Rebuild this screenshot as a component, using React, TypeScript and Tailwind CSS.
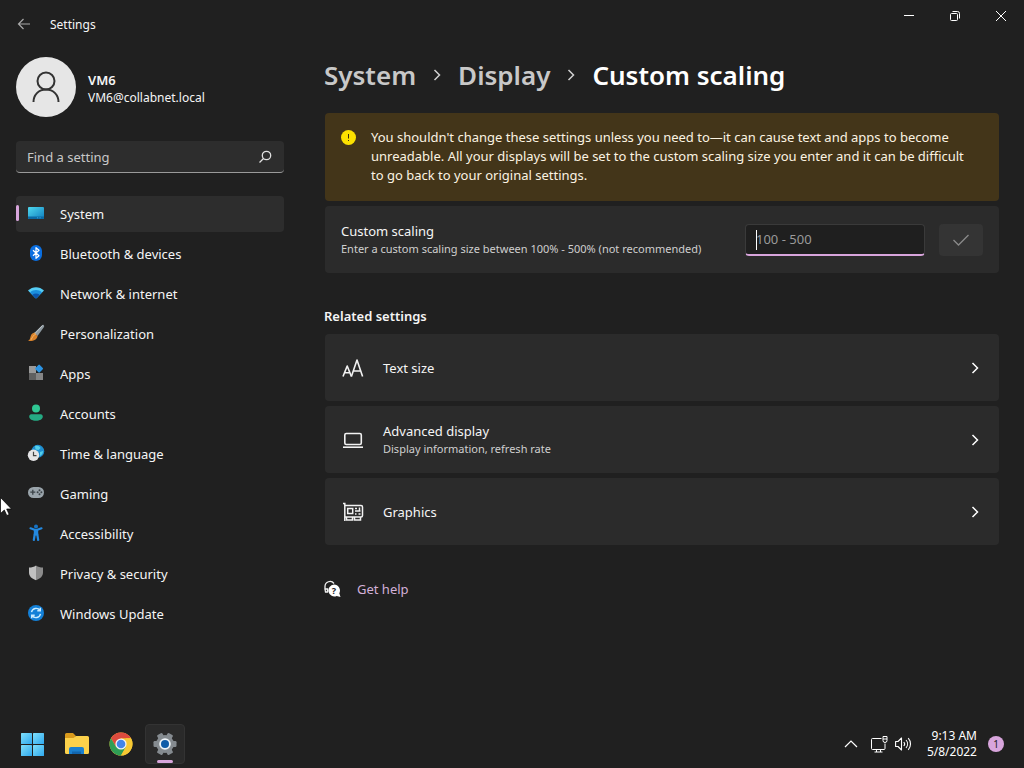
import React from 'react';

const SystemIcon = () => (
  <svg width="18" height="18" viewBox="0 0 18 18">
    <defs>
      <linearGradient id="sys" x1="0" y1="0" x2="1" y2="1">
        <stop offset="0" stopColor="#4fd8ee" />
        <stop offset="1" stopColor="#0f7fc0" />
      </linearGradient>
    </defs>
    <rect x="1" y="3" width="16" height="12" rx="1" fill="url(#sys)" />
    <path d="M1 12.500h16V14a1 1 0 0 1-1 1H2a1 1 0 0 1-1-1z" fill="#0b6aa5" />
    <path d="M10 13.800h1.200M12.500 13.800h1.200" stroke="#2fa4dd" />
  </svg>
);

const BluetoothIcon = () => (
  <svg width="18" height="18" viewBox="0 0 18 18">
    <rect x="3" y="1" width="12" height="16" rx="6" fill="#0a6ee0" />
    <path d="M6 6.300l6 5.400-3 2.600V3.700l3 2.600-6 5.400" fill="none" stroke="#fff" strokeWidth="1.200" strokeLinejoin="round" />
  </svg>
);

const NetworkIcon = () => (
  <svg width="18" height="18" viewBox="0 0 18 18">
    <path d="M1 6.500C5.500 2 12.500 2 17 6.500L9.700 14a1 1 0 0 1-1.400 0z" fill="#55cdf5" />
    <path d="M3 8.400C6.500 5.200 11.500 5.200 15 8.400L9.700 14a1 1 0 0 1-1.400 0z" fill="#1b8fdd" />
    <path d="M5.300 10.800c2.200-1.800 5.200-1.800 7.400 0L9.700 14a1 1 0 0 1-1.400 0z" fill="#0b55ac" />
  </svg>
);

const BrushIcon = () => (
  <svg width="18" height="18" viewBox="0 0 18 18">
    <path d="M16.800 1.200c.6.600.4 1.300 0 2L10.500 12 7.200 9 14.800 1.500c.6-.6 1.400-.9 2-.3z" fill="#8d989f" />
    <path d="M15.500 1.500L8 9.500" stroke="#c1c8cc" strokeWidth="1" />
    <path d="M7.200 8.800l3.400 3.200c-.5 3.500-4 5.500-9.600 5 2.300-1.400 2-3.200 2.800-5.300.6-1.700 1.900-2.600 3.400-2.900z" fill="#d9822b" />
    <path d="M7.200 8.800l1.500 1.400c-2 .4-3.200 3-4.700 5.600" fill="none" stroke="#f5b566" />
  </svg>
);

const AppsIcon = () => (
  <svg width="18" height="18" viewBox="0 0 18 18">
    <rect x="2" y="2" width="7" height="7" fill="#9a9a9a" />
    <rect x="2" y="9" width="7" height="7" fill="#606060" />
    <rect x="9" y="9" width="7" height="7" fill="#858585" />
    <rect x="9" y="1.500" width="6.200" height="6.200" rx="1" transform="rotate(45 12.100 4.600)" fill="#2b94e4" />
  </svg>
);

const AccountsIcon = () => (
  <svg width="18" height="18" viewBox="0 0 18 18">
    <circle cx="9" cy="4.500" r="4" fill="#2fc793" />
    <path d="M2.200 12.500c0-1.300.8-2.300 2-2.300h9.600c1.200 0 2 1 2 2.300 0 2.800-3 4.200-6.800 4.200s-6.800-1.400-6.800-4.200z" fill="#25aa83" />
  </svg>
);

const TimeIcon = () => (
  <svg width="18" height="18" viewBox="0 0 18 18">
    <circle cx="10.800" cy="7.200" r="6.400" fill="#1f8fd0" />
    <path d="M8 2c3-1 5 .5 5.500 2l-2 2-3-.5zM13 8l3-1c0 2-1 4-3 5z" fill="#56d0ea" />
    <circle cx="6.500" cy="11.200" r="5.700" fill="#e4e4e6" />
    <path d="M6.500 7.700v4h3" fill="none" stroke="#444" strokeWidth="1.200" />
  </svg>
);

const GamingIcon = () => (
  <svg width="18" height="18" viewBox="0 0 18 18">
    <rect x="1" y="3" width="16" height="11" rx="5.500" fill="#9aa4ab" />
    <path d="M3.300 8.200h5M5.800 5.700v5" stroke="#3b4247" strokeWidth="1.300" />
    <circle cx="12.500" cy="6.200" r="1" fill="#3b4247" />
    <circle cx="14.400" cy="8.200" r="1" fill="#3b4247" />
    <circle cx="12.500" cy="10.200" r="1" fill="#3b4247" />
    <circle cx="10.600" cy="8.200" r="1" fill="#3b4247" />
  </svg>
);

const AccessibilityIcon = () => (
  <svg width="18" height="18" viewBox="0 0 18 18">
    <circle cx="9" cy="2.600" r="2" fill="#1673c4" />
    <path d="M3.500 4.300L9 6.300l5.500-2M6.800 16l1-6h2.400l1 6" fill="none" stroke="#2389e0" strokeWidth="2.200" strokeLinecap="round" strokeLinejoin="round" />
    <rect x="6.800" y="6" width="4.400" height="5.500" fill="#2389e0" />
  </svg>
);

const ShieldIcon = () => (
  <svg width="18" height="18" viewBox="0 0 18 18">
    <path d="M9 1.500c2 1.500 4.300 2 7 2v5c0 3.600-2.500 6.200-7 7.700z" fill="#8b8b8b" />
    <path d="M9 1.500c-2 1.500-4.300 2-7 2v5c0 3.600 2.500 6.200 7 7.700z" fill="#c0c0c0" />
  </svg>
);

const UpdateIcon = () => (
  <svg width="18" height="18" viewBox="0 0 18 18">
    <circle cx="9" cy="9" r="8" fill="#1380d8" />
    <path d="M4.500 8.200A4.700 4.700 0 0 1 13 6.500M13.300 3.800v3h-3M13.500 9.800A4.700 4.700 0 0 1 5 11.500M4.700 14.200v-3h3" fill="none" stroke="#c9eaff" strokeWidth="1.400" />
  </svg>
);

const navItems = [
  { label: 'System', icon: <SystemIcon />, active: true },
  { label: 'Bluetooth & devices', icon: <BluetoothIcon /> },
  { label: 'Network & internet', icon: <NetworkIcon /> },
  { label: 'Personalization', icon: <BrushIcon /> },
  { label: 'Apps', icon: <AppsIcon /> },
  { label: 'Accounts', icon: <AccountsIcon /> },
  { label: 'Time & language', icon: <TimeIcon /> },
  { label: 'Gaming', icon: <GamingIcon /> },
  { label: 'Accessibility', icon: <AccessibilityIcon /> },
  { label: 'Privacy & security', icon: <ShieldIcon /> },
  { label: 'Windows Update', icon: <UpdateIcon /> },
];

const TextSizeIcon = () => (
  <svg width="22" height="22" viewBox="0 0 22 22" fill="none" stroke="#f2f2f2" strokeWidth="1.600" strokeLinejoin="round">
    <path d="M1 19.500L5.200 9l4.200 10.500M2.500 15.800h5.400" />
    <path d="M9.400 19.500L15 3l5.600 16.500M11.300 14h7.400" />
  </svg>
);

const LaptopIcon = () => (
  <svg width="22" height="22" viewBox="0 0 22 22" fill="none" stroke="#f2f2f2" strokeWidth="1.600">
    <rect x="2.800" y="4.500" width="16.500" height="11" rx="1.500" />
    <path d="M1 18.200h20" />
  </svg>
);

const GraphicsIcon = () => (
  <svg width="22" height="22" viewBox="0 0 22 22" fill="none" stroke="#f2f2f2" strokeWidth="1.500">
    <path d="M1 2.500h1.800v17.500M2.800 4.500h16.200a1.500 1.500 0 0 1 1.500 1.500v8.500a1.500 1.500 0 0 1-1.500 1.500H2.800" />
    <rect x="5.700" y="7.500" width="5" height="5" />
    <path d="M13 7.500h2M17.500 6.500v3M13 10h5.500M13 13h1.500M16.500 13h2M4.500 16v3h6v-3M12.500 16v3h6v-3" />
  </svg>
);

const relatedItems = [
  { title: 'Text size', icon: <TextSizeIcon /> },
  { title: 'Advanced display', sub: 'Display information, refresh rate', icon: <LaptopIcon /> },
  { title: 'Graphics', icon: <GraphicsIcon /> },
];

const Chevron = ({ size, className }: { size: number; className?: string }) => (
  <svg width={size} height={size} viewBox="0 0 12 12" fill="none" stroke="currentColor" strokeWidth="1.500" className={className}>
    <path d="M3.500 1l5 5-5 5" />
  </svg>
);

const TitleBar = () => (
  <header className="flex h-12 items-start justify-between">
    <div className="flex h-12 items-center gap-[18px] pl-4">
      <button aria-label="Back" className="text-[#a8a8a8]">
        <svg width="16" height="16" viewBox="0 0 16 16" fill="none" stroke="currentColor" strokeWidth="1.200">
          <path d="M14 8H2.500M7.500 3l-5 5 5 5" />
        </svg>
      </button>
      <span className="pt-[2px] text-[12px] leading-4">Settings</span>
    </div>
    <div className="flex">
      <button aria-label="Minimize" className="flex h-8 w-[46px] items-center justify-center">
        <svg width="10" height="10" viewBox="0 0 10 10" stroke="#fff"><path d="M0 4.500h10" /></svg>
      </button>
      <button aria-label="Restore" className="flex h-8 w-[46px] items-center justify-center">
        <svg width="10" height="10" viewBox="0 0 10 10" fill="none" stroke="#fff">
          <rect x="0.500" y="2.500" width="7" height="7" rx="1" />
          <path d="M2.500 0.500h5a2 2 0 0 1 2 2v5" />
        </svg>
      </button>
      <button aria-label="Close" className="flex h-8 w-[46px] items-center justify-center">
        <svg width="10" height="10" viewBox="0 0 10 10" stroke="#fff"><path d="M0 0l10 10M10 0L0 10" /></svg>
      </button>
    </div>
  </header>
);

const Sidebar = () => (
  <aside className="w-[300px] shrink-0 px-4 pt-[9px]">
    <div className="flex items-center gap-3">
      <div className="flex h-[60px] w-[60px] items-center justify-center rounded-full bg-[#e6e6e6]">
        <svg width="28" height="32" viewBox="0 0 28 32" fill="none" stroke="#333" strokeWidth="2">
          <circle cx="14" cy="10" r="8.500" />
          <path d="M1.500 31c0-7 5-12.500 12.500-12.500S26.500 24 26.500 31" />
        </svg>
      </div>
      <div className="pt-[3px]">
        <p className="text-[13px] leading-[18px] font-semibold">VM6</p>
        <p className="text-[12px] leading-[18px]">VM6@collabnet.local</p>
      </div>
    </div>
    <div className="relative mt-6">
      <input
        type="search"
        aria-label="Find a setting"
        placeholder="Find a setting"
        className="block h-8 w-full rounded-[4px] border-b border-[#9a9a9a] bg-[#2d2d2d] pr-10 pl-[11px] text-[13px] placeholder:text-[#c8c8c8]"
      />
      <svg width="14" height="14" viewBox="0 0 14 14" fill="none" stroke="#e0e0e0" strokeWidth="1.300" className="absolute top-[9px] right-3">
        <circle cx="8.500" cy="5.500" r="4.200" />
        <path d="M5.500 8.500L1.500 12.500" />
      </svg>
    </div>
    <nav className="mt-[23px] flex flex-col gap-1">
      {navItems.map((item) => (
        <a
          key={item.label}
          href="#"
          className={`relative flex h-9 items-center gap-[15px] rounded-[4px] pl-[11px] text-[13px] ${item.active ? 'bg-[#2d2d2d]' : ''}`}
        >
          {item.active && <span className="absolute top-[9px] left-0 h-4 w-[3px] rounded-full bg-[#d8a5dc]"></span>}
          <span className="pb-[2px]">{item.icon}</span>
          <span className="pt-px">{item.label}</span>
        </a>
      ))}
    </nav>
  </aside>
);

const Content = () => (
  <main className="min-w-0 flex-1 pr-[25px] pl-6">
    <h1 className="flex items-center pt-[9px] text-[26px] leading-9 font-semibold">
      <a href="#" className="text-[#c8c8c8]">System</a>
      <Chevron size={12} className="mx-[15px] text-[#d0d0d0]" />
      <a href="#" className="text-[#c8c8c8]">Display</a>
      <Chevron size={12} className="mx-[15px] text-[#d0d0d0]" />
      <span className="text-white">Custom scaling</span>
    </h1>

    <div className="mt-5 ml-px flex gap-[15px] rounded-[4px] bg-[#433519] pt-[15px] pr-6 pb-4 pl-4" role="alert">
      <svg width="15" height="15" viewBox="0 0 15 15" className="mt-[2px] shrink-0">
        <circle cx="7.500" cy="7.500" r="7.500" fill="#fce100" />
        <rect x="7" y="4" width="1" height="4.500" fill="#3a2f10" />
        <rect x="7" y="10" width="1" height="1" fill="#3a2f10" />
      </svg>
      <p className="text-[13px] leading-[19px] text-[#fbf3e2]">
        You shouldn't change these settings unless you need to—it can cause text and apps to become unreadable. All your displays will be set to the custom scaling size you enter and it can be difficult to go back to your original settings.
      </p>
    </div>

    <div className="mt-[5px] ml-px flex min-h-[67px] items-center rounded-[4px] bg-[#2b2b2b] px-4">
      <label htmlFor="scaling" className="min-w-0 flex-1">
        <span className="block text-[13px] leading-[18px]">Custom scaling</span>
        <span className="block text-[11px] leading-[18px] text-[#cfcfcf]">Enter a custom scaling size between 100% - 500% (not recommended)</span>
      </label>
      <div className="relative">
        <input
          id="scaling"
          type="text"
          placeholder="100 - 500"
          className="block h-8 w-[180px] rounded-[4px] border border-b-2 border-[#3a3a3a] border-b-[#d8a5dc] bg-[#1f1f1f] px-[10px] text-[13px] outline-none placeholder:text-[#9a9a9a]"
        />
        <span className="absolute top-[6px] left-[11px] h-5 w-px bg-white"></span>
      </div>
      <button aria-label="Apply" className="ml-[14px] flex h-8 w-11 items-center justify-center rounded-[4px] bg-[#343434]">
        <svg width="16" height="12" viewBox="0 0 16 12" fill="none" stroke="#8a8a8a" strokeWidth="1.300">
          <path d="M0.500 6l5 5L15.500 1" />
        </svg>
      </button>
    </div>

    <h2 className="mt-[33px] text-[13px] leading-5 font-semibold">Related settings</h2>
    <div className="mt-2 ml-px flex flex-col gap-[5px]">
      {relatedItems.map((item) => (
        <button key={item.title} className="flex h-[67px] w-full items-center rounded-[4px] bg-[#2b2b2b] pr-[18px] pl-[17px] text-left">
          {item.icon}
          <span className="ml-[19px] flex-1">
            <span className="block text-[13px] leading-[18px]">{item.title}</span>
            {item.sub && <span className="block text-[11px] leading-[18px] text-[#cfcfcf]">{item.sub}</span>}
          </span>
          <Chevron size={12} className="text-white" />
        </button>
      ))}
    </div>

    <a href="#" className="mt-[34px] flex w-fit items-center gap-4 text-[13px] leading-5 text-[#d3b1d8]">
      <svg width="17" height="18" viewBox="0 0 17 18">
        <path d="M1 10V6.500a5 5 0 0 1 9-3M1 9h2.500v3H1.500z" fill="none" stroke="#f0f0f0" strokeWidth="1.300" />
        <path d="M10 4.500a6 6 0 0 1 5.300 8.800L16.500 17l-3.800-1A6 6 0 1 1 10 4.500z" fill="#fff" />
        <text x="10" y="14" fontSize="9" fontWeight="700" textAnchor="middle" fill="#202020">?</text>
      </svg>
      Get help
    </a>
  </main>
);

const Taskbar = () => (
  <footer className="flex h-12 items-center justify-between pr-5 pl-[13px]">
    <div className="flex gap-1">
      <button aria-label="Start" className="flex h-10 w-10 items-center justify-center">
        <svg width="24" height="24" viewBox="0 0 24 24">
          <defs>
            <linearGradient id="win" x1="0" y1="0" x2="1" y2="1">
              <stop offset="0" stopColor="#7fe0fb" />
              <stop offset="1" stopColor="#2fa8ee" />
            </linearGradient>
          </defs>
          <rect y="1" width="11" height="11" rx="0.500" fill="url(#win)" />
          <rect x="12" y="1" width="11" height="11" rx="0.500" fill="url(#win)" />
          <rect y="13" width="11" height="11" rx="0.500" fill="url(#win)" />
          <rect x="12" y="13" width="11" height="11" rx="0.500" fill="url(#win)" />
        </svg>
      </button>
      <button aria-label="File Explorer" className="flex h-10 w-10 items-center justify-center">
        <svg width="26" height="24" viewBox="0 0 26 24">
          <path d="M1 2.500A1.500 1.500 0 0 1 2.500 1H9l3 3-2 3H1z" fill="#d99a1c" />
          <path d="M1 6h8.500L12 4h11.500A1.500 1.500 0 0 1 25 5.500v15a1.500 1.500 0 0 1-1.500 1.500h-21A1.500 1.500 0 0 1 1 20.500z" fill="#fbd14b" />
          <path d="M5 22v-5a2 2 0 0 1 2-2h11a2 2 0 0 1 2 2v5z" fill="#1a80cf" />
          <path d="M8 22v-2.500h9V22z" fill="#1265ad" />
        </svg>
      </button>
      <button aria-label="Chrome" className="flex h-10 w-10 items-center justify-center">
        <svg width="24" height="24" viewBox="0 0 24 24">
          <circle cx="12" cy="12" r="11.500" fill="#f7c933" />
          <path d="M2 6.300A11.500 11.500 0 0 1 22 6.300H12L7.100 14.900z" fill="#dd4b3e" />
          <path d="M2 6.300A11.500 11.500 0 0 0 12 23.500l5-8.700L7.100 14.900z" fill="#2f9e55" />
          <path d="M22 6.300A11.500 11.500 0 0 1 12 23.500l5-8.700V6.300z" fill="#f7c933" />
          <circle cx="12" cy="12" r="5.600" fill="#f3f3f3" />
          <circle cx="12" cy="12" r="4.300" fill="#4285e8" />
        </svg>
      </button>
      <button aria-label="Settings" className="relative flex h-10 w-10 items-center justify-center rounded-[4px] border border-[#333] bg-[#2a2a2a]">
        <svg width="24" height="24" viewBox="0 0 24 24">
          <g fill="#858b90">
            <circle cx="12" cy="12" r="9" />
            <rect x="9" y="0.500" width="6" height="23" rx="1.200" transform="rotate(30 12 12)" />
            <rect x="9" y="0.500" width="6" height="23" rx="1.200" transform="rotate(90 12 12)" />
            <rect x="9" y="0.500" width="6" height="23" rx="1.200" transform="rotate(150 12 12)" />
          </g>
          <circle cx="12" cy="12" r="5.800" fill="#eef4f8" />
          <circle cx="12" cy="12" r="4" fill="#0f5ca8" />
        </svg>
        <span className="absolute bottom-0 left-[11px] h-[3px] w-4 rounded-full bg-[#d8a5dc]"></span>
      </button>
    </div>

    <div className="flex items-center">
      <button aria-label="Show hidden icons" className="mr-[13px]">
        <svg width="14" height="8" viewBox="0 0 14 8" fill="none" stroke="#fff" strokeWidth="1.200"><path d="M1 7l6-6 6 6" /></svg>
      </button>
      <button aria-label="Network" className="mr-[7px]">
        <svg width="17" height="17" viewBox="0 0 17 17" fill="none" stroke="#fff">
          <path d="M10.500 2.500H1.500a1 1 0 0 0-1 1v9a1 1 0 0 0 1 1h11.500a1 1 0 0 0 1-1V7.500M5.500 13.500v2.500M9.500 13.500v2.500M3.500 16h8" />
          <path d="M12 0.500h4v4a2 2 0 0 1-4 0zM12 3h4" />
        </svg>
      </button>
      <button aria-label="Volume" className="mr-[15px]">
        <svg width="17" height="16" viewBox="0 0 17 16" fill="none" stroke="#fff" strokeWidth="1.100">
          <path d="M0.600 5.500h2.400L6.500 2v12L3 10.500H0.600z" strokeLinejoin="round" />
          <path d="M8.800 6a3 3 0 0 1 0 4M11 4a6 6 0 0 1 0 8M13.200 2.200a8.500 8.500 0 0 1 0 11.600" />
        </svg>
      </button>
      <button className="mr-[11px] text-right text-[12px] leading-4 text-white">
        <span className="block">9:13 AM</span>
        <span className="block">5/8/2022</span>
      </button>
      <span className="flex h-4 w-4 items-center justify-center rounded-full bg-[#d8a5dc] text-[10px] text-[#202020]">1</span>
    </div>
  </footer>
);

const App: React.FC = () => {
  return (
    <div className="relative flex min-h-screen flex-col bg-[#202020] font-['Noto_Sans','Open_Sans',sans-serif] text-[#f5f5f5]">
      <TitleBar />
      <div className="flex flex-1">
        <Sidebar />
        <Content />
      </div>
      <Taskbar />
      {/* mouse pointer */}
      <svg width="12" height="20" viewBox="0 0 12 20" className="pointer-events-none absolute top-[497px] left-0">
        <path d="M0.500 0.500v16l3.800-3.500 2.500 5.500 2.400-1-2.500-5.500h4.800z" fill="#fff" stroke="#000" strokeWidth="0.700" />
      </svg>
    </div>
  );
};

export default App;
